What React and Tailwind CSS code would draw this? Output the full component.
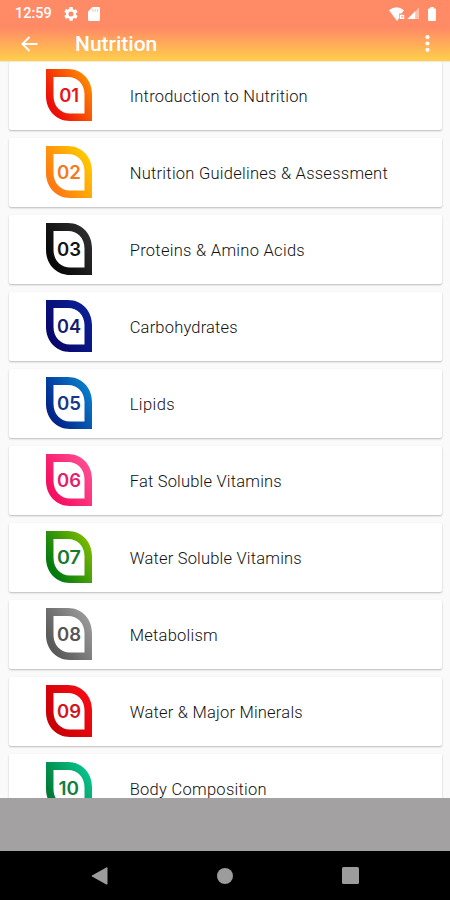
import React from 'react';

const topics = [
  { n: '01', label: 'Introduction to Nutrition', from: '#ec0d08', to: '#ff8500', ink: '#ea1518', x: 13.2, w: 20, tw: 178 },
  { n: '02', label: 'Nutrition Guidelines & Assessment', from: '#ff7a12', to: '#ffc800', ink: '#f47a20', x: 11, w: 24, tw: 258 },
  { n: '03', label: 'Proteins & Amino Acids', from: '#080808', to: '#2c2c2c', ink: '#141414', x: 11, w: 24, tw: 175 },
  { n: '04', label: 'Carbohydrates', from: '#08086c', to: '#0a1f94', ink: '#151c70', x: 11, w: 24, tw: 108 },
  { n: '05', label: 'Lipids', from: '#02258c', to: '#087bc9', ink: '#15388c', x: 11, w: 24, tw: 45 },
  { n: '06', label: 'Fat Soluble Vitamins', from: '#f50f61', to: '#ff4b91', ink: '#e5206a', x: 11, w: 24, tw: 152 },
  { n: '07', label: 'Water Soluble Vitamins', from: '#037a10', to: '#75b800', ink: '#187a2c', x: 11, w: 24, tw: 172 },
  { n: '08', label: 'Metabolism', from: '#5a5a5a', to: '#979797', ink: '#555555', x: 11, w: 24, tw: 88 },
  { n: '09', label: 'Water & Major Minerals', from: '#c90006', to: '#f50b12', ink: '#d3151d', x: 11, w: 24, tw: 173 },
  { n: '10', label: 'Body Composition', from: '#007a35', to: '#08c08a', ink: '#12803c', x: 12.6, w: 20.5, tw: 137 },
];

function Badge({ t }) {
  const id = `leaf-${t.n}`;
  return (
    <svg className="ml-[37px] h-[52px] w-[46px] shrink-0" viewBox="0 0 46 52">
      <defs>
        <linearGradient id={id} x1="0" y1="0.85" x2="1" y2="0.15">
          <stop offset="0.15" stopColor={t.from} />
          <stop offset="0.9" stopColor={t.to} />
        </linearGradient>
      </defs>
      <path
        fill={`url(#${id})`}
        fillRule="evenodd"
        d="M0 0H22C36 0 46 11 46 25V52H24C10 52 0 41 0 27ZM7.5 8V27C7.5 37 14.500 44.500 24 44.500H38.500V25C38.500 15 31.500 8 22 8Z"
      />
      <text
        x={t.x}
        y="33.300"
        textLength={t.w}
        lengthAdjust="spacingAndGlyphs"
        fontSize="18.500"
        fontWeight="600"
        fill={t.ink}
        className="font-['Inter',sans-serif]"
      >
        {t.n}
      </text>
    </svg>
  );
}

function TopicCard({ t }) {
  return (
    <li className="flex h-[68.6px] shrink-0 items-center rounded-[2px] bg-white shadow-[0_1px_2px_rgba(0,0,0,0.26)]">
      <Badge t={t} />
      <svg className="ml-[37px] h-6 w-[280px]" viewBox="0 0 280 24">
        <text
          x="0.700"
          y="18.500"
          textLength={t.tw}
          fontSize="16.500"
          fontWeight="300"
          fill="#111111"
          className="font-['Roboto',sans-serif]"
        >
          {t.label}
        </text>
      </svg>
    </li>
  );
}

function StatusBar() {
  return (
    <div className="flex h-[27px] items-center pr-[14px] pl-[15px] text-white">
      <span className="w-[37px] pt-[2px] text-[14.500px] leading-none font-medium">12:59</span>
      <svg className="ml-[12px] size-[14px]" viewBox="2 2 20 20" fill="currentColor">
        <path d="M19.140 12.940c.04-.3.06-.61.06-.94 0-.32-.02-.64-.07-.94l2.030-1.580a.49.49 0 0 0 .12-.61l-1.920-3.320a.49.49 0 0 0-.59-.22l-2.390.96a7 7 0 0 0-1.620-.94l-.36-2.540A.48.48 0 0 0 13.920 2h-3.840a.48.48 0 0 0-.47.41l-.36 2.540c-.59.24-1.130.57-1.620.94l-2.390-.96a.48.48 0 0 0-.59.22L2.740 8.470a.48.48 0 0 0 .12.610l2.030 1.580a6 6 0 0 0 0 2.280l-2.030 1.580a.49.49 0 0 0-.12.610l1.920 3.320c.12.220.37.290.59.220l2.390-.96c.5.380 1.030.7 1.620.94l.36 2.540c.05.240.24.410.48.410h3.840c.24 0 .44-.17.47-.41l.36-2.540c.59-.24 1.130-.56 1.620-.94l2.390.96c.22.080.47 0 .59-.22l1.920-3.320a.48.48 0 0 0-.12-.61zM12 15.600A3.600 3.600 0 1 1 12 8.400a3.600 3.600 0 0 1 0 7.200Z" />
      </svg>
      <svg className="ml-[10px] h-[14px] w-[12px]" viewBox="0 0 12 14">
        <path fill="currentColor" d="M4.500 0H10.700Q12 0 12 1.300V12.700Q12 14 10.700 14H1.300Q0 14 0 12.700V4.500Z" />
        <path stroke="#ff8a66" strokeOpacity="0.5" strokeWidth="1.100" d="M4.900 2v2.700M7.200 2v2.700M9.500 2v2.700" />
      </svg>
      <svg className="ml-auto h-[14px] w-[16px]" viewBox="0 0 16 14">
        <path fill="currentColor" d="M0 3.300Q7.500-2.700 15 3.300L12.500 6.400H10.200V11L8 14Z" />
        <path fill="currentColor" fillRule="evenodd" d="M10.800 7.700H15.200V12H10.800ZM12.400 9V10.500H13.700V9Z" />
      </svg>
      <svg className="ml-[2px] h-[13px] w-[13px]" viewBox="0 0 14 13">
        <path fill="currentColor" fillOpacity="0.45" d="M13 0V12.500H.5Z" />
        <path fill="currentColor" d="M8.800 4.100V12.500H.5Z" />
      </svg>
      <svg className="ml-[8px] h-[14px] w-[8px]" viewBox="0 0 8 14">
        <path fill="currentColor" d="M2.300 0H5.700V1.500H7Q8 1.500 8 2.500V13Q8 14 7 14H1Q0 14 0 13V2.500Q0 1.500 1 1.500H2.300Z" />
      </svg>
    </div>
  );
}

export default function App() {
  return (
    <div className="flex h-[900px] w-[450px] flex-col overflow-hidden bg-[#fafafa] font-['Roboto',sans-serif]">
      <header className="z-10 h-[61px] shrink-0 bg-[linear-gradient(to_bottom,#ff8a66_0px,#ff8a66_28px,#ffd04a_61px)] shadow-[0_1px_1px_rgba(0,0,0,0.08)]">
        <StatusBar />
        <div className="flex h-[33px] items-center pr-[20px] pl-[21px] text-white">
          <svg className="h-[16px] w-[17px]" viewBox="0 0 17 16" fill="none" stroke="currentColor" strokeWidth="2">
            <path d="M16.500 8H1.500M8.500 1 1.500 8l7 7" />
          </svg>
          <h1 className="ml-[37px] pt-[2px] text-[21px] leading-none font-medium whitespace-nowrap">Nutrition</h1>
          <svg className="ml-auto h-[17px] w-[5px]" viewBox="0 0 5 17" fill="currentColor">
            <circle cx="2.500" cy="2.200" r="2.100" />
            <circle cx="2.500" cy="8.500" r="2.100" />
            <circle cx="2.500" cy="14.800" r="2.100" />
          </svg>
        </div>
      </header>
      <ul className="flex min-h-0 flex-1 flex-col gap-[8.430px] overflow-hidden pr-[8px] pl-[9px]">
        {topics.map((t) => (
          <TopicCard key={t.n} t={t} />
        ))}
      </ul>
      <div className="h-[53px] shrink-0 bg-[#a3a1a2]" />
      <nav className="flex h-[49px] shrink-0 items-center justify-between bg-black pr-[91px] pl-[91px]">
        <svg className="h-[18px] w-[17px]" viewBox="0 0 17 18">
          <path fill="#9c9c9c" d="M15.300.5Q16.500 0 16.500 1.200V16.800Q16.500 18 15.300 17.400L1 9.600Q0 9 1 8.400Z" />
        </svg>
        <div className="size-[16px] rounded-full bg-[#9c9c9c]" />
        <div className="size-[17px] rounded-[1.500px] bg-[#9c9c9c]" />
      </nav>
    </div>
  );
}
